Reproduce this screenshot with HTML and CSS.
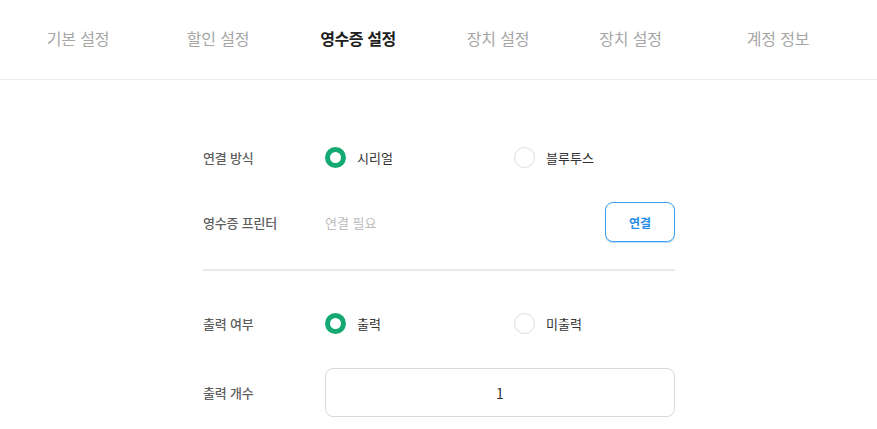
FILE: index.html
```html
<!DOCTYPE html>
<html lang="ko">
<head>
<meta charset="utf-8">
<title>영수증 설정</title>
<link rel="stylesheet" href="styles.css">
</head>
<body>
<header class="tabs">
  <div class="tab">기본 설정</div>
  <div class="tab">할인 설정</div>
  <div class="tab active">영수증 설정</div>
  <div class="tab">장치 설정</div>
  <div class="tab">장치 설정</div>
  <div class="tab">계정 정보</div>
</header>
<main class="form">
  <div class="row">
    <div class="label">연결 방식</div>
    <div class="options">
      <div class="option first"><span class="radio checked"></span><span class="opt-text">시리얼</span></div>
      <div class="option"><span class="radio"></span><span class="opt-text">블루투스</span></div>
    </div>
  </div>
  <div class="row">
    <div class="label">영수증 프린터</div>
    <div class="value">
      <span class="placeholder">연결 필요</span>
      <button class="btn">연결</button>
    </div>
  </div>
  <div class="divider"></div>
  <div class="row">
    <div class="label">출력 여부</div>
    <div class="options">
      <div class="option first"><span class="radio checked"></span><span class="opt-text">출력</span></div>
      <div class="option"><span class="radio"></span><span class="opt-text">미출력</span></div>
    </div>
  </div>
  <div class="row row-input">
    <div class="label">출력 개수</div>
    <div class="value">
      <div class="input">1</div>
    </div>
  </div>
</main>
</body>
</html>
```
FILE: styles.css
```css
* { box-sizing: border-box; }
html, body {
  margin: 0;
  padding: 0;
  background: #fff;
  font-family: "Noto Sans CJK KR", "Noto Sans", sans-serif;
}
.tabs {
  height: 80px;
  border-bottom: 1px solid #ececec;
  display: grid;
  grid-template-columns: 140px 140px 140px 140px 125px 170px;
  padding-left: 8px;
  align-items: center;
}
.tab {
  text-align: center;
  font-size: 16px;
  letter-spacing: -0.2px;
  color: #a6a6a6;
  padding-bottom: 3px;
}
.tab.active {
  color: #1e1e1e;
  font-weight: 700;
  letter-spacing: -0.4px;
}
.form {
  width: 472px;
  margin: 0 0 0 203px;
  padding-top: 57px;
  display: flex;
  flex-direction: column;
}
.row {
  display: flex;
  align-items: center;
  height: 40px;
  margin-bottom: 25px;
}
.row-input {
  height: 49px;
  margin-bottom: 0;
}
.label {
  width: 122px;
  flex: none;
  font-size: 13px;
  font-weight: 500;
  color: #5f5f5f;
  letter-spacing: -0.2px;
}
.options {
  display: flex;
  align-items: center;
  flex: 1;
}
.option {
  display: flex;
  align-items: center;
}
.option.first { width: 189px; }
.radio {
  width: 21px;
  height: 21px;
  border-radius: 50%;
  border: 1px solid #dcdcdc;
  margin-right: 11px;
  flex: none;
}
.radio.checked {
  border: 5.5px solid #14a872;
}
.opt-text {
  font-size: 13px;
  color: #333;
}
.value {
  flex: 1;
  display: flex;
  align-items: center;
  justify-content: space-between;
}
.placeholder {
  font-size: 13px;
  color: #bcbcbc;
}
.btn {
  width: 70px;
  height: 40px;
  border: 1px solid #3a9ff0;
  border-radius: 8px;
  background: #fff;
  color: #2a8de8;
  font-family: inherit;
  font-size: 12px;
  font-weight: 700;
  padding: 0;
  box-shadow: 0 1px 0 #b9dcfb;
}
.divider {
  height: 2px;
  background: #e8e8e8;
  margin: 2px 0 32px;
}
.input {
  width: 350px;
  height: 49px;
  border: 1px solid #dadada;
  border-radius: 8px;
  display: flex;
  align-items: center;
  justify-content: center;
  font-size: 14px;
  color: #333;
}
```
